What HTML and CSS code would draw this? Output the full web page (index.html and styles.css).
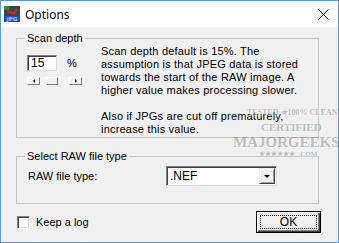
FILE: index.html
```html
<!DOCTYPE html>
<html lang="en">
<head>
  <meta charset="UTF-8">
  <title>Options</title>
  <link rel="stylesheet" href="styles.css">
</head>
<body>
  <div class="window">
    <div class="titlebar">
      <svg class="app-icon" width="16" height="16" viewBox="0 0 16 16">
        <rect x="0" y="0" width="16" height="10" fill="#2e4a4a"/>
        <rect x="0" y="0" width="5" height="4" fill="#3c8a3c"/>
        <polygon points="2,3 9,6 12,2 14,4 10,9 4,7" fill="#d8252a"/>
        <rect x="0" y="10" width="16" height="6" fill="#1f4fc8"/>
        <text x="8" y="15.2" font-size="5.5" font-family="DejaVu Sans" font-weight="bold" fill="#9fd0ff" text-anchor="middle">JPG</text>
      </svg>
      <span class="title">Options</span>
      <svg class="close" width="11" height="11" viewBox="0 0 11 11">
        <path d="M0.5 0.5 L10.5 10.5 M10.5 0.5 L0.5 10.5" stroke="#000" stroke-width="1"/>
      </svg>
    </div>

    <div class="client">
      <fieldset class="group group-scan">
        <legend>Scan depth</legend>
        <div class="scan-row">
          <div class="depth-col">
            <div class="depth-input">
              <span class="edit">15</span>
              <span class="pct">%</span>
            </div>
            <div class="hscroll">
              <span class="sb-btn"><span class="arrow-left"></span></span>
              <span class="sb-track"><span class="sb-thumb"></span></span>
              <span class="sb-btn"><span class="arrow-right"></span></span>
            </div>
          </div>
          <p class="note">Scan depth default is 15%. The<br>assumption is that JPEG data is stored<br>towards the start of the RAW image. A<br>higher value makes processing slower.<br><br>Also if JPGs are cut off prematurely,<br>increase this value.</p>
        </div>
      </fieldset>

      <fieldset class="group group-type">
        <legend>Select RAW file type</legend>
        <div class="type-row">
          <span class="type-label">RAW file type:</span>
          <div class="combo">
            <span class="combo-text">.NEF</span>
            <span class="combo-btn"><span class="arrow-down"></span></span>
          </div>
        </div>
      </fieldset>

      <div class="bottom-row">
        <span class="checkbox"></span>
        <span class="check-label">Keep a log</span>
        <button class="ok-btn">OK</button>
      </div>
    </div>

    <div class="stamp">
      <div class="stamp-tested">TESTED &#9733;100% CLEAN</div>
      <div class="stamp-cert">CERTIFIED</div>
      <div class="stamp-name">MAJORGEEKS</div>
      <div class="stamp-com">&#9733;&#9733;&#9733;&#9733;&#9733;&#9733; &nbsp;.COM</div>
    </div>
  </div>
</body>
</html>
```

FILE: styles.css
```css
body {
  margin: 0;
  font-family: "Liberation Sans", Arial, sans-serif;
  font-size: 11px;
  color: #000;
}

.window {
  position: relative;
  width: 339px;
  height: 243px;
  box-sizing: border-box;
  border: 1px solid #5b9bd5;
  background: #f0f0f0;
  overflow: hidden;
}

.titlebar {
  height: 26px;
  background: #fff;
  display: flex;
  align-items: center;
  padding-left: 3px;
}

.title {
  margin-left: 5px;
  font-family: "Noto Sans", "Open Sans", sans-serif;
  font-size: 12px;
}

.close {
  margin-left: auto;
  margin-right: 9px;
}

.client {
  padding: 5px 0 0 15px;
}

/* group boxes */
.group {
  margin: 0;
  padding: 0 0 0 10px;
  width: 303px;
  box-sizing: border-box;
  border: 1px solid #c4c4c4;
  min-inline-size: 0;
}

.group legend {
  padding: 0 2px;
  margin-left: -2px;
  line-height: 12px;
}

.group-scan {
  height: 106px;
}

.group-type {
  margin-top: 12px;
  height: 54px;
}

.scan-row {
  display: flex;
}

.depth-col {
  width: 74px;
  padding-top: 11px;
}

.depth-input {
  display: flex;
  align-items: center;
  height: 16px;
}

.edit {
  box-sizing: border-box;
  width: 30px;
  height: 16px;
  background: #fff;
  padding-left: 3px;
  line-height: 14px;
  font-size: 12px;
  border: 1px solid;
  border-color: #808080 #dcdcdc #dcdcdc #808080;
  box-shadow: inset 1px 1px 0 #404040;
}

.pct {
  margin-left: 10px;
}

.hscroll {
  display: flex;
  margin-top: 6px;
  width: 55px;
  height: 8px;
}

.sb-btn {
  box-sizing: border-box;
  width: 13px;
  height: 8px;
  display: flex;
  align-items: center;
  justify-content: center;
  background: #f0f0f0;
  border: 1px solid;
  border-color: #fff #808080 #808080 #fff;
}

.arrow-left {
  border-top: 2px solid transparent;
  border-bottom: 2px solid transparent;
  border-right: 2px solid #000;
}

.arrow-right {
  border-top: 2px solid transparent;
  border-bottom: 2px solid transparent;
  border-left: 2px solid #000;
}

.sb-track {
  flex: 1;
  display: flex;
  background: #f4f4f4;
}

.sb-thumb {
  box-sizing: border-box;
  width: 12px;
  height: 8px;
  margin-left: 6px;
  background: #f0f0f0;
  border: 1px solid;
  border-color: #fff #808080 #808080 #fff;
}

.note {
  margin: 1px 0 0;
  line-height: 13px;
  letter-spacing: 0.2px;
  white-space: nowrap;
}

/* raw file type */
.type-row {
  display: flex;
  align-items: center;
  margin-top: 4px;
  height: 20px;
}

.type-label {
  width: 138px;
  padding-left: 1px;
}

.combo {
  box-sizing: border-box;
  width: 111px;
  height: 20px;
  display: flex;
  align-items: center;
  background: #fff;
  border: 1px solid;
  border-color: #808080 #dcdcdc #dcdcdc #808080;
  box-shadow: inset 1px 1px 0 #404040;
}

.combo-text {
  padding-left: 3px;
  font-size: 12px;
}

.combo-btn {
  box-sizing: border-box;
  margin-left: auto;
  margin-right: 1px;
  width: 16px;
  height: 16px;
  display: flex;
  align-items: center;
  justify-content: center;
  background: #f0f0f0;
  border: 1px solid;
  border-color: #f0f0f0 #404040 #404040 #f0f0f0;
  box-shadow: inset 1px 1px 0 #fff, inset -1px -1px 0 #a0a0a0;
}

.arrow-down {
  border-left: 3px solid transparent;
  border-right: 3px solid transparent;
  border-top: 3px solid #000;
}

/* bottom */
.bottom-row {
  display: flex;
  align-items: center;
  margin-top: 7px;
  width: 305px;
  height: 22px;
}

.checkbox {
  box-sizing: border-box;
  width: 13px;
  height: 13px;
  margin-left: 1px;
  background: #fff;
  border: 1px solid;
  border-color: #808080 #fff #fff #808080;
  box-shadow: inset 1px 1px 0 #404040, inset -1px -1px 0 #dcdcdc;
}

.check-label {
  margin-left: 6px;
}

.ok-btn {
  position: relative;
  margin-left: auto;
  box-sizing: border-box;
  width: 65px;
  height: 22px;
  padding: 0;
  font-family: inherit;
  font-size: 12px;
  background: #f0f0f0;
  border: 1px solid #000;
  box-shadow: inset 1px 1px 0 #fff, inset -1px -1px 0 #404040, inset -2px -2px 0 #808080;
}

.ok-btn::after {
  content: "";
  position: absolute;
  left: 3px;
  top: 3px;
  right: 3px;
  bottom: 3px;
  border: 1px dotted #000;
}

/* watermark stamp lying over the dialog */
.stamp {
  position: absolute;
  left: 230px;
  top: 106px;
  width: 108px;
  font-family: "Liberation Serif", serif;
  font-weight: bold;
  color: rgba(120, 120, 120, 0.45);
  text-shadow: 1px 1px 0 rgba(255, 255, 255, 0.5);
  white-space: nowrap;
  pointer-events: none;
}

.stamp-tested {
  margin-left: 16px;
  font-size: 8px;
  line-height: 12px;
}

.stamp-cert {
  margin-left: 30px;
  font-size: 11px;
  line-height: 16px;
}

.stamp-name {
  margin-left: 2px;
  font-size: 15px;
  line-height: 15px;
}

.stamp-com {
  margin-left: 28px;
  font-size: 7px;
  line-height: 9px;
}
```
